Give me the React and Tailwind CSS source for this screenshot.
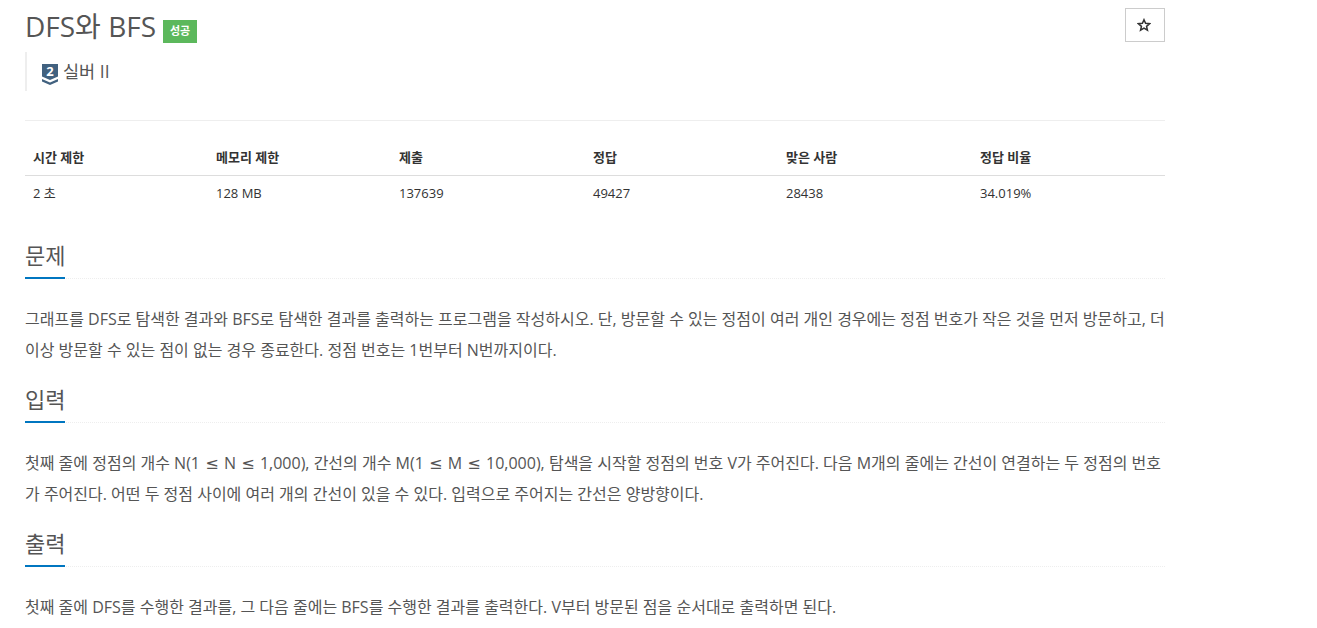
const stats = [
    ['시간 제한', '2 초', 'w-[183px]'],
    ['메모리 제한', '128 MB', 'w-[183px]'],
    ['제출', '137639', 'w-[194px]'],
    ['정답', '49427', 'w-[193px]'],
    ['맞은 사람', '28438', 'w-[194px]'],
    ['정답 비율', '34.019%', 'w-[185px]'],
];

// the less-or-equal sign is wider in the original, so it gets its own font
const Leq = () => <span className="mx-[1.1px] font-['DejaVu_Sans',sans-serif]">≤</span>;

const Section = ({ title, lines }) => (
    <section>
        <div className="relative h-[44px] border-b border-dotted border-[#eee]">
            <h2 className="text-[22px] leading-[40px] text-[#555]">{title}</h2>
            <div className="absolute left-0 bottom-[-1px] w-[40px] h-[2px] bg-[#0076c0]"></div>
        </div>
        <div className="pt-[25px] pb-[13px] text-[16px] leading-[31px] text-[#555]">
            {lines.map((line, i) => (
                <p key={i} className="whitespace-nowrap">{line}</p>
            ))}
        </div>
    </section>
);

const App = () => {
    return (
        <div className="w-[1317px] h-[628px] overflow-hidden bg-white pl-[25px] font-['Open_Sans','Noto_Sans_CJK_KR',sans-serif]">
            <div className="w-[1140px]">
                <header className="flex items-start justify-between pt-[8px] h-[52px]">
                    <div className="flex items-center">
                        <h1 className="text-[28px] leading-[36px] text-[#555]">DFS와 BFS</h1>
                        <span className="ml-[7px] mt-[11px] w-[34px] h-[23px] flex items-center justify-center bg-[#5cb85c] text-white text-[11px] font-bold">성공</span>
                    </div>
                    <button className="w-[40px] h-[34px] flex items-center justify-center border border-[#ccc] bg-white">
                        <svg width="14" height="14" viewBox="0 0 24 24" className="-ml-[2px]" fill="none" stroke="#333" strokeWidth="2.6" strokeLinejoin="miter">
                            <path d="M12 3l2.7 6.2 6.8.6-5.1 4.5 1.5 6.7L12 17.5 6.100 21l1.500-6.700-5.100-4.500 6.800-.6z" />
                        </svg>
                    </button>
                </header>

                <div className="flex items-start h-[39px] border-l-[2px] border-[#eee] pl-[15px]">
                    <svg width="16" height="21" viewBox="0 0 16 21" className="mt-[12px] shrink-0 overflow-visible">
                        <path d="M0 0h16v12.500l-8 3.500-8-3.500z" fill="#41617f" />
                        <path d="M0 15l8 3.500 8-3.500v2.500L8 21l-8-3.500z" fill="#41617f" />
                        <text x="8" y="12" textAnchor="middle" fontSize="13" fontWeight="700" fill="#fff">2</text>
                    </svg>
                    <span className="ml-[5px] mt-[7px] text-[17.5px] leading-[25px] text-[#555]">실버 II</span>
                </div>

                <div className="mt-[29px] border-t border-[#eee] pt-[20px]">
                    <div className="flex h-[35px] items-center border-b-[1px] border-[#ddd] pl-[8px] text-[13px] font-bold text-[#333]">
                        {stats.map(([label, , width]) => (
                            <div key={label} className={width}>{label}</div>
                        ))}
                    </div>
                    <div className="flex h-[36px] items-center pl-[8px] text-[13px] text-[#333]">
                        {stats.map(([label, value, width]) => (
                            <div key={label} className={width}>{value}</div>
                        ))}
                    </div>
                </div>

                <div className="mt-[23px]">
                    <Section
                        title="문제"
                        lines={[
                            '그래프를 DFS로 탐색한 결과와 BFS로 탐색한 결과를 출력하는 프로그램을 작성하시오. 단, 방문할 수 있는 정점이 여러 개인 경우에는 정점 번호가 작은 것을 먼저 방문하고, 더',
                            '이상 방문할 수 있는 점이 없는 경우 종료한다. 정점 번호는 1번부터 N번까지이다.',
                        ]}
                    />
                    <Section
                        title="입력"
                        lines={[
                            <>첫째 줄에 정점의 개수 N(1 <Leq /> N <Leq /> 1,000), 간선의 개수 M(1 <Leq /> M <Leq /> 10,000), 탐색을 시작할 정점의 번호 V가 주어진다. 다음 M개의 줄에는 간선이 연결하는 두 정점의 번호</>,
                            '가 주어진다. 어떤 두 정점 사이에 여러 개의 간선이 있을 수 있다. 입력으로 주어지는 간선은 양방향이다.',
                        ]}
                    />
                    <Section
                        title="출력"
                        lines={['첫째 줄에 DFS를 수행한 결과를, 그 다음 줄에는 BFS를 수행한 결과를 출력한다. V부터 방문된 점을 순서대로 출력하면 된다.']}
                    />
                </div>
            </div>
        </div>
    );
};

export default App;
